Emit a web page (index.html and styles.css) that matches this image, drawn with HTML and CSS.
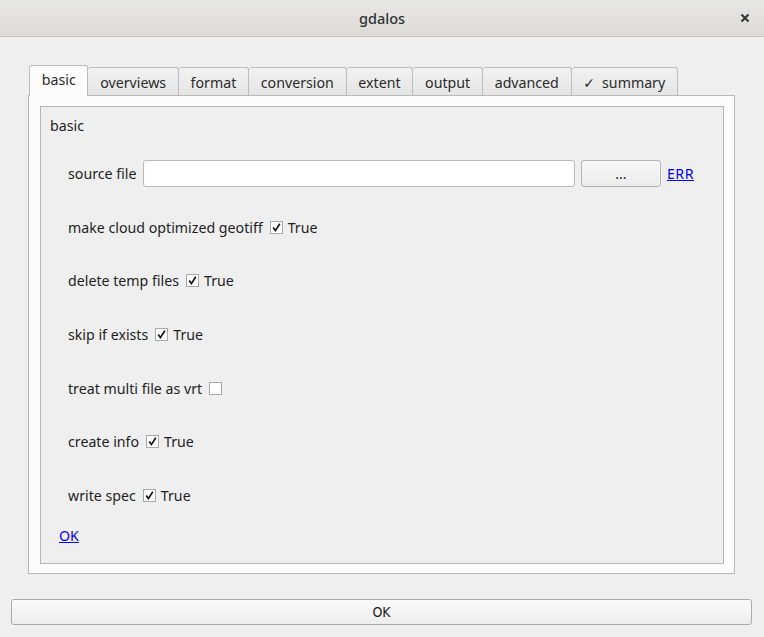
FILE: index.html
```html
<!DOCTYPE html>
<html>
<head>
<meta charset="utf-8">
<link rel="stylesheet" href="styles.css">
</head>
<body>
<div class="window">
  <div class="titlebar">
    <span class="title">gdalos</span>
    <span class="close"><svg width="10" height="10" viewBox="0 0 10 10"><path d="M1.5 1.5 L8.5 8.5 M8.5 1.5 L1.5 8.5" stroke="#2e3436" stroke-width="2" fill="none"/></svg></span>
  </div>
  <div class="content">
    <div class="tabwidget">
      <div class="tabbar">
        <div class="tab active">basic</div>
        <div class="tab">overviews</div>
        <div class="tab">format</div>
        <div class="tab">conversion</div>
        <div class="tab">extent</div>
        <div class="tab">output</div>
        <div class="tab">advanced</div>
        <div class="tab"><span class="tick">✓</span>summary</div>
      </div>
      <div class="pane">
        <div class="group">
          <div class="group-title">basic</div>
          <div class="rows">
            <div class="row">
              <span class="label">source file</span>
              <span class="input"></span>
              <span class="btn">...</span>
              <a class="link" href="#">ERR</a>
            </div>
            <div class="row">
              <span class="label">make cloud optimized geotiff</span>
              <span class="cb checked"><svg width="11" height="11" viewBox="0 0 11 11"><path d="M2.2 5.6 L4.4 8.6 L8.8 1.8" stroke="#111" stroke-width="1.7" fill="none"/></svg></span>
              <span class="cbtext">True</span>
            </div>
            <div class="row">
              <span class="label">delete temp files</span>
              <span class="cb checked"><svg width="11" height="11" viewBox="0 0 11 11"><path d="M2.2 5.6 L4.4 8.6 L8.8 1.8" stroke="#111" stroke-width="1.7" fill="none"/></svg></span>
              <span class="cbtext">True</span>
            </div>
            <div class="row">
              <span class="label">skip if exists</span>
              <span class="cb checked"><svg width="11" height="11" viewBox="0 0 11 11"><path d="M2.2 5.6 L4.4 8.6 L8.8 1.8" stroke="#111" stroke-width="1.7" fill="none"/></svg></span>
              <span class="cbtext">True</span>
            </div>
            <div class="row">
              <span class="label">treat multi file as vrt</span>
              <span class="cb"></span>
            </div>
            <div class="row">
              <span class="label">create info</span>
              <span class="cb checked"><svg width="11" height="11" viewBox="0 0 11 11"><path d="M2.2 5.6 L4.4 8.6 L8.8 1.8" stroke="#111" stroke-width="1.7" fill="none"/></svg></span>
              <span class="cbtext">True</span>
            </div>
            <div class="row">
              <span class="label">write spec</span>
              <span class="cb checked"><svg width="11" height="11" viewBox="0 0 11 11"><path d="M2.2 5.6 L4.4 8.6 L8.8 1.8" stroke="#111" stroke-width="1.7" fill="none"/></svg></span>
              <span class="cbtext">True</span>
            </div>
          </div>
          <a class="link ok-link" href="#">OK</a>
        </div>
      </div>
    </div>
    <div class="okbtn">OK</div>
  </div>
</div>
</body>
</html>
```
FILE: styles.css
```css
* { box-sizing: border-box; }
html, body {
  margin: 0;
  padding: 0;
  background: #efefef;
  font-family: "Noto Sans", "DejaVu Sans", sans-serif;
  font-size: 14.2px;
  color: #1e1e1e;
}
.window {
  width: 764px;
  height: 637px;
  display: flex;
  flex-direction: column;
}
.titlebar {
  height: 37px;
  flex: none;
  background: linear-gradient(#e8e6e3, #dedbd7);
  border-bottom: 1px solid #c8c5c1;
  display: flex;
  align-items: center;
  justify-content: center;
  position: relative;
}
.title {
  font-size: 14.5px;
  color: #2e3436;
  font-weight: 500;
}
.close {
  position: absolute;
  right: 14px;
  top: 13px;
  display: flex;
}
.content {
  padding: 28px 0 0 0;
  display: flex;
  flex-direction: column;
}
.tabwidget {
  margin: 0 29px 0 28px;
}
.tabbar {
  display: flex;
  align-items: flex-end;
  padding-left: 1px;
  height: 30px;
}
.tab {
  height: 28px;
  padding: 1px 11.75px 0;
  border: 1px solid #bcbcbc;
  border-left: none;
  border-bottom: none;
  border-radius: 3px 3px 0 0;
  background: linear-gradient(#f2f2f2, #e5e5e5);
  display: flex;
  align-items: center;
  color: #2a2a2a;
  white-space: nowrap;
}
.tab.active {
  height: 31px;
  margin-bottom: -1px;
  border-left: 1px solid #bcbcbc;
  background: #fcfcfc;
  position: relative;
  z-index: 1;
  padding-top: 0;
  padding-bottom: 3px;
}
.tick {
  margin-right: 7px;
  font-size: 14px;
}
.pane {
  border: 1px solid #b8b8b8;
  background: #fcfcfc;
  padding: 10px 10px 9px 11px;
}
.group {
  height: 458px;
  border: 1px solid #b6b6b6;
  background: #efefef;
  padding: 9px 27px 0 9px;
  display: flex;
  flex-direction: column;
}
.group-title {
  line-height: 20px;
  height: 20px;
}
.rows {
  margin-top: 24px;
  padding-left: 18px;
  display: flex;
  flex-direction: column;
  gap: 26.67px;
}
.row {
  height: 27px;
  display: flex;
  align-items: center;
}
.label {
  white-space: nowrap;
  margin-right: 6px;
}
.input {
  flex: 1;
  height: 27px;
  background: #ffffff;
  border: 1px solid #b9b9b9;
  border-radius: 3px;
  margin-left: 1px;
}
.btn {
  width: 80px;
  height: 27px;
  margin-left: 6px;
  border: 1px solid #b4b4b4;
  border-radius: 3px;
  background: linear-gradient(#f8f8f8, #ececec);
  display: flex;
  align-items: center;
  justify-content: center;
  color: #2a2a2a;
}
.row .link {
  margin-left: 6px;
  margin-right: 2px;
  letter-spacing: 0.5px;
}
.link {
  color: #0000ff;
  text-decoration: underline;
}
.cb {
  width: 13px;
  height: 13px;
  border: 1px solid #a8a8a8;
  background: #ffffff;
  margin-left: 1px;
  display: flex;
  align-items: center;
  justify-content: center;
}
.cbtext {
  margin-left: 5px;
}
.ok-link {
  margin-left: 9px;
  margin-top: 17px;
  line-height: 20px;
  align-self: flex-start;
}
.okbtn {
  margin: 25px 12px 0 11px;
  height: 26px;
  border: 1px solid #acacac;
  border-radius: 3px;
  background: linear-gradient(#fbfbfb, #ededed);
  display: flex;
  align-items: center;
  justify-content: center;
  color: #222;
  font-family: "DejaVu Sans Condensed", "DejaVu Sans", sans-serif;
  font-size: 14px;
}
```
